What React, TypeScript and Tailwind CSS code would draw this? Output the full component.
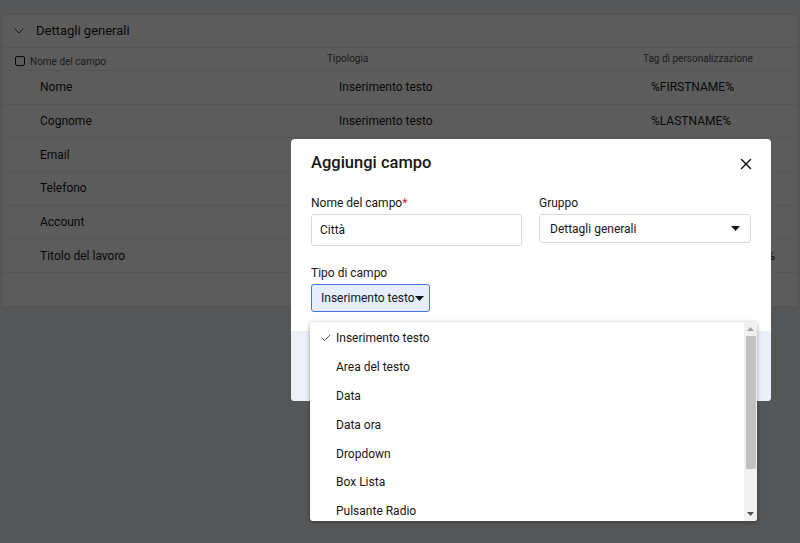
import React from 'react';
import { ChevronDown, X, Check } from 'lucide-react';

const rows = [
  { name: 'Nome', type: 'Inserimento testo', tag: '%FIRSTNAME%' },
  { name: 'Cognome', type: 'Inserimento testo', tag: '%LASTNAME%' },
  { name: 'Email', type: 'Inserimento testo', tag: '%EMAIL%' },
  { name: 'Telefono', type: 'Inserimento testo', tag: '%PHONE%' },
  { name: 'Account', type: 'Inserimento testo', tag: '%ACCOUNT%' },
  { name: 'Titolo del lavoro', type: 'Inserimento testo', tag: '%TITOLODELLAVORO%' },
];

const options = [
  'Inserimento testo',
  'Area del testo',
  'Data',
  'Data ora',
  'Dropdown',
  'Box Lista',
  'Pulsante Radio',
];

function Caret() {
  return (
    <svg width="9" height="5" viewBox="0 0 9 5" className="shrink-0">
      <path d="M0 0h9L4.5 5z" fill="#161616" />
    </svg>
  );
}

export default function App() {
  return (
    <div
      className="relative w-[800px] h-[543px] overflow-hidden bg-[#eceef2] text-[#161616]"
      style={{ fontFamily: 'Roboto, "Noto Sans", sans-serif' }}
    >
      {/* page behind the dialog */}
      <div className="h-[14px]" />
      <div className="mx-[2px] bg-white border border-[#e4e6ea]">
        <div className="h-[33px] flex items-center gap-[9px] pl-[8px] border-b border-[#e9eaed]">
          <ChevronDown className="w-[16px] h-[16px]" strokeWidth={1.3} />
          <span className="text-[13px]">Dettagli generali</span>
        </div>
        <div className="h-[23px] flex border-b border-[#e9eaed] text-[10px] text-[#525252]">
          <div className="w-[324px] flex items-center gap-[5px] pl-[12px] pt-[4px]">
            <span className="w-[10px] h-[10px] border border-[#161616] rounded-[2px]" />
            <span>Nome del campo</span>
          </div>
          <div className="w-[316px] flex items-center pb-[2px]">Tipologia</div>
          <div className="flex items-center pb-[2px]">Tag di personalizzazione</div>
        </div>
        {rows.map((r) => (
          <div key={r.name} className="h-[33.7px] flex items-center border-b border-[#e9eaed] text-[12px] whitespace-nowrap">
            <div className="w-[336px] pl-[37px]">{r.name}</div>
            <div className="w-[312px]">{r.type}</div>
            <div>{r.tag}</div>
          </div>
        ))}
        <div className="h-[33px]" />
      </div>

      {/* dim overlay */}
      <div className="absolute inset-0 bg-black/[0.64]" />

      {/* dialog */}
      <div className="absolute left-[291px] top-[139px] w-[480px] bg-white rounded-[4px] overflow-hidden">
        <div className="px-[20px] pt-[12px] pb-[19px]">
          <div className="flex items-center justify-between h-[24px] pt-[1px]">
            <h2 className="text-[16.5px] font-medium">Aggiungi campo</h2>
            <X className="w-[18px] h-[18px] mr-[-4px]" strokeWidth={2} />
          </div>
          <div className="mt-[20px] flex gap-[17px]">
            <div className="w-[211px]">
              <div className="text-[12px] leading-[16px]">
                Nome del campo<span className="text-[#da1e28]">*</span>
              </div>
              <div className="mt-[3px] h-[32px] border border-[#d6d9de] rounded-[3px] flex items-center px-[8px] text-[12px]">
                Città
              </div>
            </div>
            <div className="w-[212px]">
              <div className="text-[12px] leading-[16px]">Gruppo</div>
              <div className="mt-[3px] h-[29px] border border-[#d6d9de] rounded-[3px] flex items-center justify-between pl-[10px] pr-[10px] text-[12px]">
                <span>Dettagli generali</span>
                <Caret />
              </div>
            </div>
          </div>
          <div className="mt-[19px] text-[12px] leading-[16px]">Tipo di campo</div>
          <div className="mt-[3px] w-[119px] h-[28px] bg-[#e6edfc] border border-[#4a72d9] rounded-[3px] flex items-center pl-[9px] text-[12px] whitespace-nowrap">
            <span>Inserimento testo</span>
            <Caret />
          </div>
        </div>
        <div className="h-[70px] bg-[#eef0f7]" />
      </div>

      {/* open dropdown list */}
      <div className="absolute left-[310px] top-[322px] w-[447px] h-[199px] bg-white rounded-[3px] shadow-[0_1px_4px_rgba(0,0,0,0.35)] flex overflow-hidden">
        <div className="flex-1 pt-[2px]">
          {options.map((o, i) => (
            <div key={o} className="h-[28.8px] flex items-center text-[12px]">
              <div className="w-[26px] flex justify-end pr-[4px]">
                {i === 0 && <Check className="w-[12px] h-[12px]" strokeWidth={1.5} />}
              </div>
              <span>{o}</span>
            </div>
          ))}
        </div>
        <div className="w-[13px] bg-[#f1f1f1] flex flex-col items-center">
          <div className="h-[14px] flex items-center justify-center">
            <svg width="7" height="4" viewBox="0 0 7 4"><path d="M0 4h7L3.5 0z" fill="#a3a3a3" /></svg>
          </div>
          <div className="w-[10px] h-[133px] bg-[#c1c1c1]" />
          <div className="flex-1" />
          <div className="h-[14px] flex items-center justify-center">
            <svg width="7" height="4" viewBox="0 0 7 4"><path d="M0 0h7L3.5 4z" fill="#505050" /></svg>
          </div>
        </div>
      </div>
    </div>
  );
}
